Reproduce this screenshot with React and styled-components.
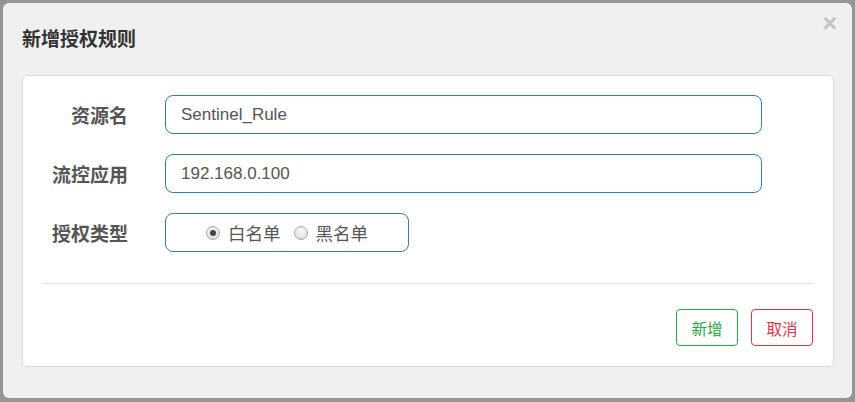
import React, { useState } from 'react';
import styled, { createGlobalStyle } from 'styled-components';

const GlobalStyle = createGlobalStyle`
  html, body {
    margin: 0;
    padding: 0;
    background: #959595;
  }
  body {
    font-family: "Liberation Sans", "Noto Sans CJK SC", sans-serif;
  }
`;

const Backdrop = styled.div`
  width: 855px;
  height: 402px;
  box-sizing: border-box;
  padding: 3px 3px 4px 3px;
  background: #959595;
`;

const Dialog = styled.div`
  width: 849px;
  height: 395px;
  box-sizing: border-box;
  background: #f0f0f0;
  border-radius: 6px;
  position: relative;
  display: flex;
  flex-direction: column;
  padding: 0 18px 31px 19px;
`;

const Header = styled.div`
  height: 72px;
  display: flex;
  align-items: center;
  padding-bottom: 4px;
  box-sizing: border-box;
`;

const Title = styled.h4`
  margin: 0;
  font-family: "Noto Sans CJK SC", sans-serif;
  font-size: 19px;
  font-weight: 700;
  color: #333;
`;

const Close = styled.span`
  position: absolute;
  top: 8px;
  right: 15px;
  font-family: "Liberation Sans", sans-serif;
  font-size: 25px;
  font-weight: 700;
  color: #c4c4c4;
  line-height: 1;
  cursor: pointer;
`;

const Card = styled.div`
  flex: 1;
  background: #fff;
  border: 1px solid #dcdcdc;
  border-radius: 5px;
  padding: 19px 20px 19px 20px;
  display: flex;
  flex-direction: column;
`;

const Form = styled.div`
  display: grid;
  grid-template-columns: 85px 597px;
  column-gap: 37px;
  row-gap: 20px;
  align-items: center;
`;

const Label = styled.label`
  text-align: right;
  font-family: "Noto Sans CJK SC", sans-serif;
  font-size: 19px;
  font-weight: 700;
  color: #555;
  white-space: nowrap;
`;

const Input = styled.input`
  box-sizing: border-box;
  height: 39px;
  width: 597px;
  border: 1px solid #337ab7;
  border-radius: 8px;
  padding: 0 15px;
  font-family: "Liberation Sans", "Noto Sans CJK SC", sans-serif;
  font-size: 17px;
  color: #555;
  outline: none;
  background: #fff;
`;

const RadioBox = styled.div`
  box-sizing: border-box;
  height: 39px;
  width: 244px;
  border: 1px solid #337ab7;
  border-radius: 8px;
  display: flex;
  align-items: center;
  justify-content: center;
  gap: 13px;
`;

const RadioItem = styled.label`
  display: flex;
  align-items: center;
  gap: 8px;
  font-family: "Noto Sans CJK SC", sans-serif;
  font-size: 17.5px;
  color: #555;
  cursor: pointer;
`;

const Dot = styled.span`
  width: 14px;
  height: 14px;
  box-sizing: border-box;
  border-radius: 50%;
  border: 1px solid #a8a8a8;
  background: radial-gradient(circle at 50% 35%, #fafafa 0%, #d8d8d8 100%);
  display: flex;
  align-items: center;
  justify-content: center;
  margin-top: 1px;

  &::after {
    content: '';
    width: 6px;
    height: 6px;
    border-radius: 50%;
    background: ${p => (p.$checked ? '#444' : 'transparent')};
  }
`;

const Divider = styled.hr`
  margin: 31px 0 0 0;
  border: 0;
  border-top: 1px solid #e5e5e5;
`;

const Footer = styled.div`
  display: flex;
  justify-content: flex-end;
  gap: 13px;
  margin-top: 25px;
`;

const Button = styled.button`
  width: 62px;
  height: 37px;
  box-sizing: border-box;
  background: #fff;
  border: 1px solid ${p => p.$color};
  color: ${p => p.$color};
  border-radius: 4px;
  font-family: "Noto Sans CJK SC", sans-serif;
  font-size: 15.5px;
  cursor: pointer;
  padding: 0;
`;

export default function App() {
  const [resource, setResource] = useState('Sentinel_Rule');
  const [app, setApp] = useState('192.168.0.100');
  const [strategy, setStrategy] = useState(0);

  return (
    <Backdrop>
      <GlobalStyle />
      <Dialog>
        <Header>
          <Title>新增授权规则</Title>
        </Header>
        <Close>×</Close>
        <Card>
          <Form>
            <Label>资源名</Label>
            <Input value={resource} onChange={e => setResource(e.target.value)} />
            <Label>流控应用</Label>
            <Input value={app} onChange={e => setApp(e.target.value)} />
            <Label>授权类型</Label>
            <RadioBox>
              {['白名单', '黑名单'].map((name, i) => (
                <RadioItem key={name} onClick={() => setStrategy(i)}>
                  <Dot $checked={strategy === i} />
                  {name}
                </RadioItem>
              ))}
            </RadioBox>
          </Form>
          <Divider />
          <Footer>
            <Button $color="#28a745">新增</Button>
            <Button $color="#dc3545">取消</Button>
          </Footer>
        </Card>
      </Dialog>
    </Backdrop>
  );
}
